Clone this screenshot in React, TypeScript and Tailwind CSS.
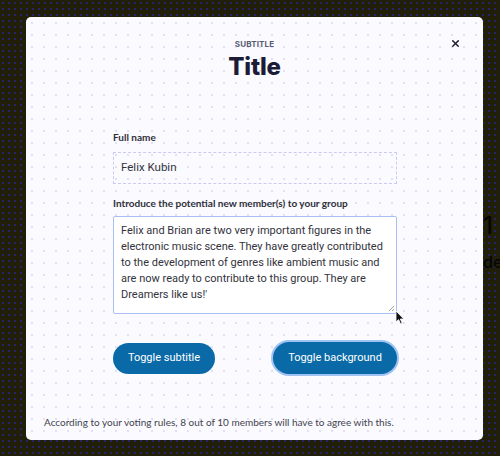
import { X } from 'lucide-react';

const bio =
  "Felix and Brian are two very important figures in the electronic music scene. They have greatly contributed to the development of genres like ambient music and are now ready to contribute to this group. They are Dreamers like us!'";

export default function App() {
  return (
    <div className="relative w-[500px] h-[456px] overflow-hidden bg-[#211f0a] bg-[radial-gradient(circle,#23246a_0.9px,transparent_1.1px)] bg-[size:6px_6px]">
      {/* page content behind the overlay */}
      <div className="pl-[483px] pt-[214px] text-[#050505] font-['Inter',sans-serif] leading-none whitespace-nowrap">
        <div className="text-[24px] font-medium">1</div>
        <div className="mt-[16px] text-[16px] font-medium">de</div>
      </div>

      <div className="absolute left-[26px] top-[17px] w-[457px] h-[423px] rounded-[5px] bg-[#fafaff] bg-[radial-gradient(circle,#e0e0f6_0.8px,transparent_1px)] bg-[size:12px_12px] flex flex-col">
        <button className="absolute right-[22px] top-[21px] text-[#1b1b2a]">
          <X size={11} strokeWidth={3} />
        </button>

        <div className="pt-[23px] flex flex-col items-center">
          <div className="text-[8px] font-bold tracking-[0.02em] text-[#585c72] font-['Inter',sans-serif] leading-none">
            SUBTITLE
          </div>
          <h1 className="mt-[7px] text-[24px] font-extrabold text-[#1c1c36] font-['Inter',sans-serif] leading-none tracking-[-0.01em]">
            Title
          </h1>
        </div>

        <div className="mt-[53px] ml-[87px] w-[284px] flex flex-col font-['Lato',sans-serif]">
          <label className="text-[10px] font-bold text-[#2f2f3a] leading-none">Full name</label>
          <div className="mt-[10px] h-[32px] border border-dashed border-[#cacaf2] flex items-center px-[7px] text-[11.5px] text-[#33333d] font-['Roboto',sans-serif]">
            Felix Kubin
          </div>

          <label className="mt-[14px] text-[10px] font-bold text-[#2f2f3a] leading-none">
            Introduce the potential new member(s) to your group
          </label>
          <div className="relative mt-[8px] h-[98px] border border-[#a9bff5] rounded-[2px] bg-white px-[7px] pt-[6px] text-[11px] leading-[16px] text-[#33333d] font-['Roboto',sans-serif]">
            {bio}
            {/* resize grip */}
            <svg className="absolute right-[1px] bottom-[1px]" width="7" height="7" viewBox="0 0 7 7">
              <path d="M6 1L1 6M6 4L4 6" stroke="#a3a39a" strokeWidth="1" />
            </svg>
            {/* mouse pointer */}
            <svg className="absolute left-[281px] top-[93px]" width="10" height="15" viewBox="0 0 10 15">
              <path d="M1 1L1 12L3.6 9.6L5.6 14L7.2 13.3L5.3 9H8.8Z" fill="#111" stroke="#fff" strokeWidth="0.8" />
            </svg>
          </div>

          <div className="mt-[28px] flex items-center justify-between font-['Roboto',sans-serif]">
            <button className="h-[31px] w-[102px] rounded-full bg-[#0a6aa8] text-white text-[11px]">
              Toggle subtitle
            </button>
            <button className="h-[32px] w-[124px] rounded-full bg-[#0a6aa8] text-white text-[11px] ring-2 ring-[#9ec3f3]">
              Toggle background
            </button>
          </div>
        </div>

        <div className="mt-auto mb-[13px] ml-[18px] text-[10px] text-[#43434d] font-['Lato',sans-serif] leading-none">
          According to your voting rules, 8 out of 10 members will have to agree with this.
        </div>
      </div>
    </div>
  );
}
